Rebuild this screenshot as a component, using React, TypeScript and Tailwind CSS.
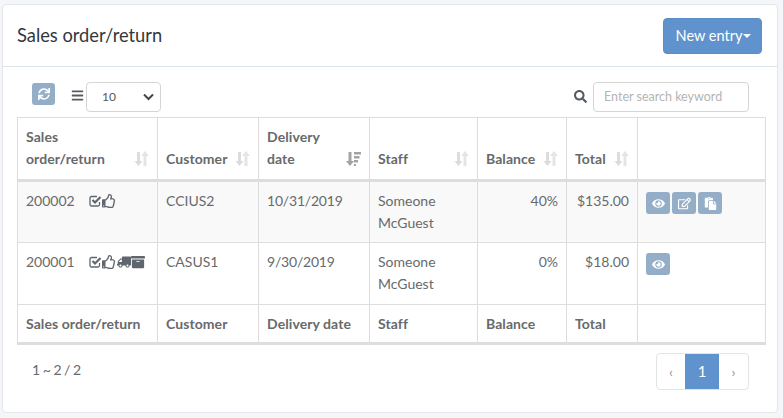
import { FaArchive, FaBars, FaEye, FaPaste, FaRegEdit, FaRegThumbsUp, FaSearch, FaSync, FaTruck } from 'react-icons/fa';

const cell = 'border border-[#dddddd] px-2';

// both arrows of an unsorted column
function SortIcon() {
  return (
    <svg width="15" height="15" viewBox="0 0 15 15" className="text-[#dcdcdc]" fill="currentColor">
      <path d="M3 1h3v9h2.500L4.500 15 .5 10H3z" />
      <path d="M11 0l4 5h-2.500v10h-3V5H7z" opacity="0.75" />
    </svg>
  );
}

// column sorted descending: arrow plus shrinking bars
function SortedIcon() {
  return (
    <svg width="15" height="15" viewBox="0 0 15 15" className="text-[#a3a3a3]" fill="currentColor">
      <path d="M2.500 1h3v9H8l-4 5-4-5h2.500z" />
      <path d="M8 1h7v2.500H8zM8 5h5.500v2.500H8zM8 9h4v2.500H8zM8 13h2v2H8z" />
    </svg>
  );
}

function CheckIcon() {
  return (
    <svg width="13" height="12" viewBox="0 0 13 12" fill="none" stroke="currentColor">
      <path d="M10.500 7v2.500a1.500 1.500 0 0 1-1.500 1.500H2.500A1.500 1.500 0 0 1 1 9.500V3a1.500 1.500 0 0 1 1.500-1.500H8" strokeWidth="1.300" />
      <path d="M3.500 5l2.500 2.500L11.500 2" strokeWidth="2.200" />
    </svg>
  );
}

function HeadCell({ label, width, sorted }: { label: string; width: number; sorted?: boolean }) {
  return (
    <th className={`${cell} border-b-[3px] pt-[7px] pb-[9px] text-left align-bottom font-bold tracking-[0.08px]`} style={{ width }}>
      <div className="flex items-end justify-between">
        <span className="leading-[22px]">{label}</span>
        <span className="mb-[4px] ml-px shrink-0">{sorted ? <SortedIcon /> : <SortIcon />}</span>
      </div>
    </th>
  );
}

function ActionButton({ children }: { children: React.ReactNode }) {
  return (
    <button className="flex h-[22px] w-6 items-center justify-center rounded-[3px] bg-[#95aec8] text-[13px] text-white">
      {children}
    </button>
  );
}

function OrderRow({ id, customer, date, balance, total, shipped, striped, editable }: {
  id: string;
  customer: string;
  date: string;
  balance: string;
  total: string;
  shipped?: boolean;
  striped?: boolean;
  editable?: boolean;
}) {
  const text = `${cell} pt-[8px] pb-[8px] align-top leading-[22px]`;
  return (
    <tr className={striped ? 'bg-[#f9f9f9]' : ''}>
      <td className={`${text} h-[62px]`}>
        <div className="flex items-center">
          <span className="w-[63px]">{id}</span>
          <span className="flex items-center text-[14px] text-[#5f666d]">
            <CheckIcon />
            <FaRegThumbsUp />
            {shipped && <FaTruck className="ml-px -scale-x-100" />}
            {shipped && <FaArchive />}
          </span>
        </div>
      </td>
      <td className={text}>{customer}</td>
      <td className={`${text} tracking-[-0.2px]`}>{date}</td>
      <td className={text}>Someone<br />McGuest</td>
      <td className={`${text} text-right`}>{balance}</td>
      <td className={`${text} text-right`}>{total}</td>
      <td className={`${cell} py-[10px] align-top`}>
        <div className="flex gap-[2px]">
          <ActionButton><FaEye /></ActionButton>
          {editable && <ActionButton><FaRegEdit /></ActionButton>}
          {editable && <ActionButton><FaPaste /></ActionButton>}
        </div>
      </td>
    </tr>
  );
}

export default function App() {
  return (
    <div className="h-[418px] w-[783px] overflow-hidden bg-[#f4f6f9] pt-1 pl-[2px] font-['Lato','Liberation_Sans',sans-serif] text-[14px] text-[#676a6c]">
      <div className="h-[409px] w-[776px] rounded-[4px] border border-[#e4e7ea] bg-white">
        {/* Header */}
        <div className="flex h-[62px] items-center justify-between border-b border-[#dde4ea] pr-[15px] pl-[14px]">
          <h1 className="text-[18.300px] font-normal text-[#33373d]">Sales order/return</h1>
          <button className="flex h-9 w-[99px] items-center justify-center rounded-[4px] border border-[#5a8ec9] bg-[#6093cd] pl-[2px] text-[14.500px] text-white">
            New entry
            <span className="ml-px border-x-[4px] border-t-[4px] border-x-transparent border-t-white" />
          </button>
        </div>

        <div className="pt-[15px] pr-[12px] pl-[14px]">
          {/* Toolbar */}
          <div className="flex h-[35px] items-start justify-between">
            <div className="flex items-start pl-[15px]">
              <button className="mt-px flex h-[22px] w-[23px] items-center justify-center rounded-[3px] bg-[#95aec8] text-[12px] text-white">
                <FaSync />
              </button>
              <FaBars className="mt-[7px] ml-[16px] text-[13px] text-[#555b62]" />
              <div className="ml-[2px] flex h-[30px] w-[75px] items-center justify-between rounded-[4px] border border-[#d5d5d5] bg-white pr-[6px] pl-[15px] text-[12px] text-[#555555]">
                10
                <svg width="11" height="8" viewBox="0 0 11 8" fill="none" stroke="#444" strokeWidth="2"><path d="M1 1.500l4.500 4.500L10 1.500" /></svg>
              </div>
            </div>
            <div className="flex items-start pr-[16px]">
              <FaSearch className="mt-[8px] mr-[6px] text-[13px] text-[#555b62]" />
              <div className="flex h-[30px] w-[156px] items-center rounded-[4px] border border-[#d5d5d5] pl-[10px] text-[12.500px] text-[#b4b4b4]">
                Enter search keyword
              </div>
            </div>
          </div>

          {/* Table */}
          <table className="w-[749px] table-fixed border-collapse border-b-[3px] border-[#dddddd] text-[14px]">
            <thead>
              <tr className="h-[63px] text-[#676a6c]">
                <HeadCell label="Sales order/return" width={140} />
                <HeadCell label="Customer" width={101} />
                <HeadCell label="Delivery date" width={111} sorted />
                <HeadCell label="Staff" width={108} />
                <HeadCell label="Balance" width={89} />
                <HeadCell label="Total" width={71} />
                <th className={`${cell} border-b-[3px]`} />
              </tr>
            </thead>
            <tbody>
              <OrderRow id="200002" customer="CCIUS2" date="10/31/2019" balance="40%" total="$135.00" striped editable />
              <OrderRow id="200001" customer="CASUS1" date="9/30/2019" balance="0%" total="$18.00" shipped />
            </tbody>
            <tfoot>
              <tr className="h-[39px] text-left font-bold tracking-[0.08px]">
                <td className={`${cell} align-middle whitespace-nowrap`}>Sales order/return</td>
                <td className={`${cell} align-middle`}>Customer</td>
                <td className={`${cell} align-middle`}>Delivery date</td>
                <td className={`${cell} align-middle`}>Staff</td>
                <td className={`${cell} align-middle`}>Balance</td>
                <td className={`${cell} align-middle`}>Total</td>
                <td className={cell} />
              </tr>
            </tfoot>
          </table>

          {/* Pagination */}
          <div className="flex items-start justify-between pt-[8px] pr-[16px] pl-[15px]">
            <span className="mt-[6px] tracking-[-0.5px]">1 ~ 2 / 2</span>
            <div className="flex h-[37px] overflow-hidden rounded-[4px] border border-[#e4e4e4] text-[#8a94a6]">
              <span className="flex w-[28px] items-center justify-center">‹</span>
              <span className="-my-px flex w-[34px] items-center justify-center bg-[#6093cd] text-[15px] text-white">1</span>
              <span className="flex w-[29px] items-center justify-center">›</span>
            </div>
          </div>
        </div>
      </div>
    </div>
  );
}
